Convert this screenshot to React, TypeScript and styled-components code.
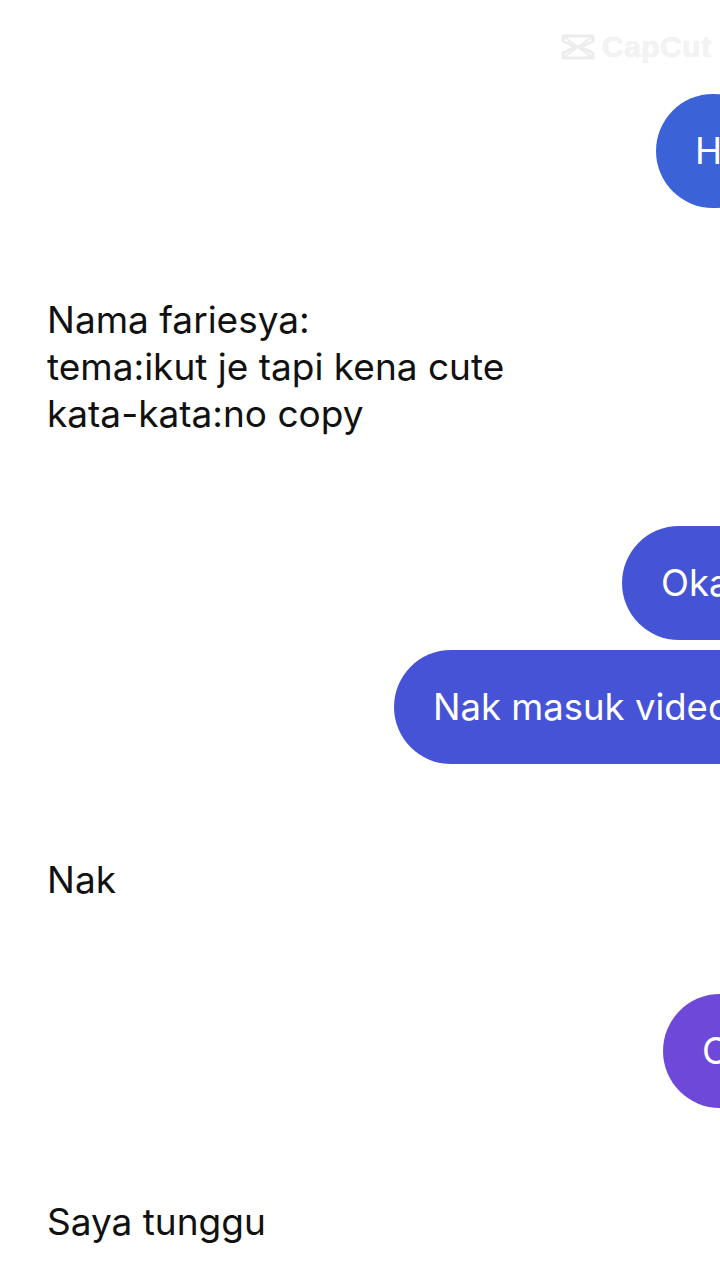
import React from "react";
import styled, { createGlobalStyle } from "styled-components";

const Global = createGlobalStyle`
  html, body { margin: 0; padding: 0; background: #ffffff; }
  body { overflow-x: hidden; font-family: Inter, "Liberation Sans", Arial, sans-serif; }
`;

const Page = styled.div`
  position: relative;
  width: 720px;
  height: 1280px;
  overflow: hidden;
  background: #ffffff;
  display: flex;
  flex-direction: column;
  padding-top: 94px;
  box-sizing: border-box;
`;

const Watermark = styled.div`
  position: absolute;
  top: 30px;
  left: 560px;
  display: flex;
  align-items: center;
  gap: 6px;
  color: #f3f3f3;
  font-family: "Liberation Sans", Arial, sans-serif;
  font-weight: 700;
  font-size: 30px;
  letter-spacing: 0.5px;
  text-shadow: 0 0 1px #e4e4e4;
`;

const BubbleRow = styled.div<{ $gap: number; $left: number }>`
  display: flex;
  margin-top: ${(p) => p.$gap}px;
  padding-left: ${(p) => p.$left}px;
`;

const Bubble = styled.div<{ $color: string }>`
  height: 114px;
  flex: 0 0 auto;
  display: flex;
  align-items: center;
  padding: 0 40px 0 39px;
  border-radius: 57px;
  background: ${(p) => p.$color};
  color: #ffffff;
  font-family: Inter, "Liberation Sans", Arial, sans-serif;
  font-size: 36.5px;
  white-space: nowrap;
`;

const Message = styled.div<{ $gap: number }>`
  margin-top: ${(p) => p.$gap}px;
  padding-left: 47px;
  color: #111111;
  font-family: Inter, "Liberation Sans", Arial, sans-serif;
  font-size: 37px;
  line-height: 47px;
  white-space: pre-line;
`;

const CapCutLogo = () => (
  <svg width="36" height="30" viewBox="0 0 36 30" fill="none" stroke="#ececec" strokeWidth="3" strokeLinejoin="round">
    <path d="M3 4 H33 V9 L21 15 L33 21 V26 H3 V21 L15 15 L3 9 Z" />
    <path d="M3 4 L33 26 M33 4 L3 26" strokeWidth="2" />
  </svg>
);

export default function App() {
  return (
    <>
      <Global />
      <Page>
        <Watermark>
          <CapCutLogo />
          <span>CapCut</span>
        </Watermark>
        <BubbleRow $gap={0} $left={656}>
          <Bubble $color="#3b62d7">Hi</Bubble>
        </BubbleRow>
        <Message $gap={88}>{"Nama fariesya:\ntema:ikut je tapi kena cute\nkata-kata:no copy"}</Message>
        <BubbleRow $gap={89} $left={622}>
          <Bubble $color="#4454d5">Okay</Bubble>
        </BubbleRow>
        <BubbleRow $gap={10} $left={394}>
          <Bubble $color="#4653d7">Nak masuk video ke?</Bubble>
        </BubbleRow>
        <Message $gap={92}>Nak</Message>
        <BubbleRow $gap={91} $left={663}>
          <Bubble $color="#6d48d9">Ok</Bubble>
        </BubbleRow>
        <Message $gap={90}>Saya tunggu</Message>
      </Page>
    </>
  );
}
